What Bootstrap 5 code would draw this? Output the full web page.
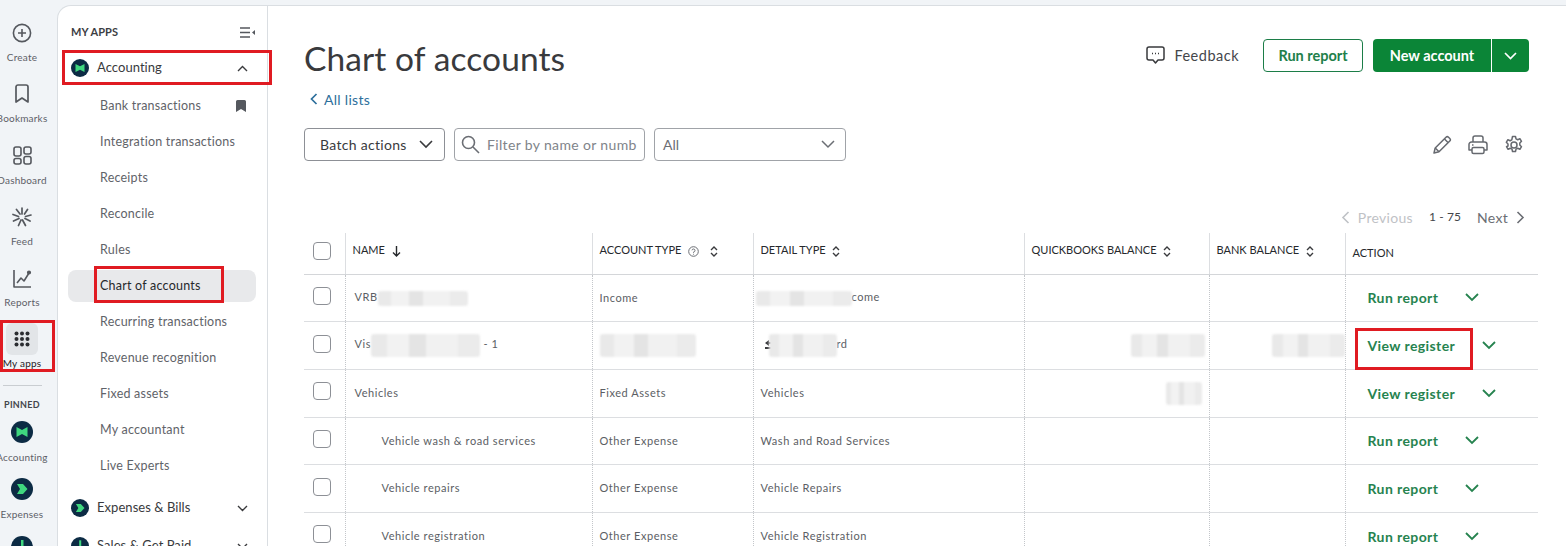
<!DOCTYPE html>
<html lang="en">
<head>
<meta charset="UTF-8">
<title>Chart of accounts</title>
<link href="https://cdn.jsdelivr.net/npm/bootstrap@5.3.0/dist/css/bootstrap.min.css" rel="stylesheet">
<style>
html, body { height: 546px; overflow: hidden; }
body { background: #f1f4f7; font-family: Lato, "Liberation Sans", sans-serif; color: #393a3d; position: relative; }
.app-shell { height: 546px; padding-top: 5px; }
.rail { width: 57px; flex: none; padding-top: 10px; }
.rail-inner { width: 44px; }
.rail-item { height: 61.3px; color: #5d6067; font-size: 10px; letter-spacing: .2px; white-space: nowrap; }
.rail-item .rail-icon { width: 32px; height: 32px; margin-top: 2px; margin-bottom: 1px; }
.rail-item.is-active { color: #1f2024; }
.rail-item.is-active .rail-icon { background: #e2e5e8; border-radius: 6px; }
.rail-rule { width: 39px; height: 1px; background: #c9cdd1; margin: 2px 0 13px; align-self: center; }
.rail-pinned { font-size: 9px; font-weight: 700; color: #44464b; letter-spacing: .3px; margin-bottom: 11px; line-height: 11px; }
.pin-item { height: 57.5px; color: #5d6067; font-size: 10px; letter-spacing: .2px; white-space: nowrap; }
.pin-item svg { margin-bottom: 7px; }
.side { width: 211px; flex: none; background: #fff; border: 1px solid #dadee2; border-width: 1px 1px 0 1px; border-top-left-radius: 14px; padding: 0 10px; overflow: hidden; }
.side-head { height: 44px; padding: 8px 2px 0 3px; font-size: 11px; font-weight: 700; letter-spacing: .05px; color: #3c3e43; }
.side-group { height: 36px; padding: 0 9px 0 3px; font-size: 13px; color: #393a3d; letter-spacing: .05px; }
.side-group + .side-sub { margin-top: 2px; }
.side-group + .side-group { margin-top: 2px; }
.side-link { height: 36px; padding: 0 10px 0 32px; margin-right: 1px; font-size: 12.5px; color: #5f6369; letter-spacing: .22px; white-space: nowrap; }
.side-link.is-current { background: #e8e9eb; border-radius: 8px; height: 32px; margin-top: 2px; margin-bottom: 2px; color: #26282c; }
.side-sub { margin-bottom: 6px; }
.page-main { flex: 1; min-width: 0; background: #fff; border-top: 1px solid #dadee2; padding: 0 28px 0 36px; }
.title-row { height: 76px; padding: 23px 9px 0 0; }
.page-title { font-size: 33.5px; font-weight: 400; margin: 0; letter-spacing: .1px; color: #393a3d; line-height: 1; padding-top: 6px; }
.feedback { font-size: 14.5px; color: #44464b; letter-spacing: .5px; margin-right: 24px; }
.feedback svg { margin-right: 9px; }
.btn-line { border: 1px solid #1c7d48; color: #217f4b; background: #fff; width: 100px; height: 33px; font-size: 14.5px; font-weight: 700; padding: 0; border-radius: 4px; margin-right: 10px; }
.btn-solid { background: #0b8537; color: #fff; border: 0; height: 33px; font-size: 14.5px; font-weight: 700; padding: 0; }
.btn-solid.main-part { width: 118px; border-radius: 4px 0 0 4px; }
.btn-solid.caret-part { width: 38px; border-radius: 0 4px 4px 0; border-left: 1px solid #fff; }
.back-row { height: 46px; font-size: 14px; color: #2d6f9c; letter-spacing: .3px; padding: 7px 0 0 6px; }
.back-row svg { margin-right: 6px; }
.tool-row { height: 33px; gap: 9px; }
.tool-icons { margin-right: 14px; }
.batch-btn { width: 141px; height: 33px; border: 1px solid #8d9096; border-radius: 4px; font-size: 14px; color: #393a3d; letter-spacing: .3px; background: #fff; padding: 0 11px 0 15px; }
.filter-box { width: 191px; height: 33px; border: 1px solid #a0a3a8; border-radius: 4px; padding: 0 6px 0 6px; font-size: 14px; color: #80848a; letter-spacing: .35px; overflow: hidden; white-space: nowrap; }
.filter-box svg { margin-right: 7px; }
.all-box { width: 192px; height: 33px; border: 1px solid #a0a3a8; border-radius: 4px; padding: 0 10px 0 8px; font-size: 14px; color: #6b6e74; }
.pager { height: 32px; font-size: 14px; padding-right: 13px; margin-top: 40px; letter-spacing: .3px; color: #6b6e74; }
.pager .pg-off { color: #bfc2c6; }
.pager .pg-count { color: #44464b; font-size: 12px; letter-spacing: .1px; margin: 0 16px; }
.coa-table { table-layout: fixed; width: 1234px; border-collapse: collapse; margin: 0; font-size: 11px; letter-spacing: .55px; color: #5b5e64; }
.coa-table col:nth-child(1) { width: 41px; }
.coa-table col:nth-child(2) { width: 247px; }
.coa-table col:nth-child(3) { width: 161px; }
.coa-table col:nth-child(4) { width: 271px; }
.coa-table col:nth-child(5) { width: 185px; }
.coa-table col:nth-child(6) { width: 136px; }
.coa-table col:nth-child(7) { width: 193px; }
.coa-table th { height: 41px; padding: 0 7px 6px; border-left: 1px solid #dcdee1; border-bottom: 1px solid #d4d6d9; font-size: 11px; font-weight: 400; color: #26282c; letter-spacing: 0; white-space: nowrap; vertical-align: middle; }
.coa-table th:first-child, .coa-table td:first-child { border-left: 0; padding: 0 0 4px 9px; }
.coa-table th.plain-th { padding-bottom: 1px; }
.coa-table td { height: 47.7px; padding: 0 7px; border-left: 1px dotted #c3c6ca; border-bottom: 1px solid #dcdee1; vertical-align: middle; white-space: nowrap; }
.coa-table td.top-name { padding-left: 9px; }
.coa-table td.sub-name { padding-left: 36px; }
.tick { width: 18px; height: 18px; border: 1px solid #8d9096; border-radius: 4px; background: #fff; display: block; }
.act-cell { display: flex; align-items: center; padding-left: 22px; font-size: 14px; font-weight: 700; color: #26834f; letter-spacing: .4px; }
.act-cell svg { margin-left: 27px; }
.smudge { display: inline-block; height: 15px; vertical-align: middle; border-radius: 3px; filter: blur(.8px); background: linear-gradient(90deg, #e9e9e9 0 15%, #f2f2f2 15% 35%, #e4e4e4 35% 50%, #f1f1f1 50% 80%, #ebebeb 80%); }
.smudge.is-tall { height: 23px; }
.mark-box { position: absolute; border: 3px solid #e01b22; pointer-events: none; }
.mark-one { left: 62px; top: 50px; width: 210px; height: 35px; }
.mark-two { left: 94px; top: 266px; width: 130px; height: 37px; }
.mark-three { left: 0; top: 320px; width: 55px; height: 52px; }
.mark-four { left: 1355px; top: 328px; width: 118px; height: 42px; }
</style>
</head>
<body>
<div class="app-shell d-flex">
  <nav class="rail">
    <div class="rail-inner d-flex flex-column">
      <div class="rail-item d-flex flex-column align-items-center">
        <div class="rail-icon d-flex align-items-center justify-content-center">
          <svg width="20" height="20" viewBox="0 0 20 20" fill="none" stroke="#55585e" stroke-width="1.6"><circle cx="10" cy="10" r="8.6"/><path d="M10 6v8M6 10h8"/></svg>
        </div>
        <span>Create</span>
      </div>
      <div class="rail-item d-flex flex-column align-items-center">
        <div class="rail-icon d-flex align-items-center justify-content-center">
          <svg width="16" height="20" viewBox="0 0 16 20" fill="none" stroke="#55585e" stroke-width="1.7" stroke-linejoin="round"><path d="M2 3a2 2 0 0 1 2-2h8a2 2 0 0 1 2 2v15l-6-4-6 4z"/></svg>
        </div>
        <span>Bookmarks</span>
      </div>
      <div class="rail-item d-flex flex-column align-items-center">
        <div class="rail-icon d-flex align-items-center justify-content-center">
          <svg width="19" height="19" viewBox="0 0 19 19" fill="none" stroke="#55585e" stroke-width="1.6"><rect x="1" y="1" width="7" height="9" rx="2"/><rect x="11" y="1" width="7" height="7" rx="2"/><rect x="1" y="12.5" width="7" height="5.5" rx="2"/><rect x="11" y="10.5" width="7" height="7.5" rx="2"/></svg>
        </div>
        <span>Dashboard</span>
      </div>
      <div class="rail-item d-flex flex-column align-items-center">
        <div class="rail-icon d-flex align-items-center justify-content-center">
          <svg width="20" height="20" viewBox="0 0 20 20" fill="none" stroke="#55585e" stroke-width="1.7" stroke-linecap="round"><path d="M10 1v6M15.5 2.5l-3 4.5M19 8l-5.500 1.500M18 14l-5-2.500M13.500 18.500L10.500 13M6.500 18.500L9 13M1.500 14L7 11.500M1 7.500l5.500 2M4.500 2.500L8 7"/></svg>
        </div>
        <span>Feed</span>
      </div>
      <div class="rail-item d-flex flex-column align-items-center">
        <div class="rail-icon d-flex align-items-center justify-content-center">
          <svg width="19" height="19" viewBox="0 0 19 19" fill="none" stroke="#55585e" stroke-width="1.6" stroke-linejoin="round"><path d="M1 1v17h17"/><path d="M4 14l4-5 3 3 5-8"/><circle cx="16" cy="3.500" r="1.300" fill="#55585e"/></svg>
        </div>
        <span>Reports</span>
      </div>
      <div class="rail-item is-active d-flex flex-column align-items-center">
        <div class="rail-icon d-flex align-items-center justify-content-center">
          <svg width="16" height="16" viewBox="0 0 16 16" fill="#2b2d31"><circle cx="2.500" cy="2.500" r="2"/><circle cx="8" cy="2.500" r="2"/><circle cx="13.500" cy="2.500" r="2"/><circle cx="2.500" cy="8" r="2"/><circle cx="8" cy="8" r="2"/><circle cx="13.500" cy="8" r="2"/><circle cx="2.500" cy="13.500" r="2"/><circle cx="8" cy="13.500" r="2"/><circle cx="13.500" cy="13.500" r="2"/></svg>
        </div>
        <span>My apps</span>
      </div>
      <div class="rail-rule"></div>
      <div class="rail-pinned text-center">PINNED</div>
      <div class="pin-item d-flex flex-column align-items-center">
        <svg width="22" height="22" viewBox="0 0 22 22"><circle cx="11" cy="11" r="11" fill="#0c2b44"/><path d="M5.500 6l5.500 3 5.500-3v10l-5.500-3-5.500 3z" fill="#3fd77f"/></svg>
        <span>Accounting</span>
      </div>
      <div class="pin-item d-flex flex-column align-items-center">
        <svg width="22" height="22" viewBox="0 0 22 22"><circle cx="11" cy="11" r="11" fill="#0c2b44"/><path d="M6 6h6l4.500 5-4.500 5H6l3-5z" fill="#3fd77f"/></svg>
        <span>Expenses</span>
      </div>
      <div class="pin-item d-flex flex-column align-items-center">
        <svg width="22" height="22" viewBox="0 0 22 22"><circle cx="11" cy="11" r="11" fill="#0c2b44"/><path d="M10 4h2.500v8H10z" fill="#3fd77f"/></svg>
      </div>
    </div>
  </nav>

  <aside class="side">
    <div class="side-head d-flex justify-content-between align-items-center">
      <span>MY APPS</span>
      <svg width="15" height="11" viewBox="0 0 15 11" fill="none" stroke="#55585e" stroke-width="1.400"><path d="M0 1h10M0 5.500h10M0 10h10"/><path d="M15 3v5l-3-2.500z" fill="#55585e" stroke="none"/></svg>
    </div>
    <div class="side-group d-flex align-items-center">
      <svg class="me-2" width="18" height="18" viewBox="0 0 22 22"><circle cx="11" cy="11" r="11" fill="#0c2b44"/><path d="M5.500 6l5.500 3 5.500-3v10l-5.500-3-5.500 3z" fill="#3fd77f"/></svg>
      <span class="flex-grow-1">Accounting</span>
      <svg width="11" height="7" viewBox="0 0 11 7" fill="none" stroke="#393a3d" stroke-width="1.400"><path d="M1 6l4.500-4.500L10 6"/></svg>
    </div>
    <div class="side-sub">
      <div class="side-link d-flex align-items-center justify-content-between">
        <span>Bank transactions</span>
        <svg width="10" height="12" viewBox="0 0 10 12" fill="#55585e"><path d="M0 1.500A1.500 1.500 0 0 1 1.500 0h7A1.500 1.500 0 0 1 10 1.500V12L5 9l-5 3z"/></svg>
      </div>
      <div class="side-link d-flex align-items-center">Integration transactions</div>
      <div class="side-link d-flex align-items-center">Receipts</div>
      <div class="side-link d-flex align-items-center">Reconcile</div>
      <div class="side-link d-flex align-items-center">Rules</div>
      <div class="side-link is-current d-flex align-items-center">Chart of accounts</div>
      <div class="side-link d-flex align-items-center">Recurring transactions</div>
      <div class="side-link d-flex align-items-center">Revenue recognition</div>
      <div class="side-link d-flex align-items-center">Fixed assets</div>
      <div class="side-link d-flex align-items-center">My accountant</div>
      <div class="side-link d-flex align-items-center">Live Experts</div>
    </div>
    <div class="side-group d-flex align-items-center">
      <svg class="me-2" width="18" height="18" viewBox="0 0 22 22"><circle cx="11" cy="11" r="11" fill="#0c2b44"/><path d="M6 6h6l4.500 5-4.500 5H6l3-5z" fill="#3fd77f"/></svg>
      <span class="flex-grow-1">Expenses &amp; Bills</span>
      <svg width="11" height="7" viewBox="0 0 11 7" fill="none" stroke="#393a3d" stroke-width="1.400"><path d="M1 1l4.500 4.500L10 1"/></svg>
    </div>
    <div class="side-group d-flex align-items-center">
      <svg class="me-2" width="18" height="18" viewBox="0 0 22 22"><circle cx="11" cy="11" r="11" fill="#0c2b44"/><path d="M10 4h2.500v8H10z" fill="#3fd77f"/></svg>
      <span class="flex-grow-1">Sales &amp; Get Paid</span>
      <svg width="11" height="7" viewBox="0 0 11 7" fill="none" stroke="#393a3d" stroke-width="1.400"><path d="M1 1l4.500 4.500L10 1"/></svg>
    </div>
  </aside>

  <main class="page-main">
    <div class="title-row d-flex justify-content-between align-items-center">
      <h1 class="page-title">Chart of accounts</h1>
      <div class="d-flex align-items-center">
        <div class="feedback d-flex align-items-center">
          <svg width="19" height="20" viewBox="0 0 19 20" fill="none" stroke="#393a3d" stroke-width="1.500" stroke-linejoin="round"><path d="M3 1h13a2 2 0 0 1 2 2v9a2 2 0 0 1-2 2h-4l-2.500 3L7 14H3a2 2 0 0 1-2-2V3a2 2 0 0 1 2-2z"/><path d="M6 7.500h1M9 7.500h1M12 7.500h1" stroke-width="1.600"/></svg>
          <span>Feedback</span>
        </div>
        <button class="btn btn-line" type="button">Run report</button>
        <div class="d-flex">
          <button class="btn btn-solid main-part" type="button">New account</button>
          <button class="btn btn-solid caret-part d-flex align-items-center justify-content-center" type="button" aria-label="More">
            <svg width="13" height="8" viewBox="0 0 13 8" fill="none" stroke="#fff" stroke-width="1.700"><path d="M1 1l5.500 5.500L12 1"/></svg>
          </button>
        </div>
      </div>
    </div>
    <div class="back-row d-flex align-items-start">
      <svg class="mt-1" width="8" height="12" viewBox="0 0 8 12" fill="none" stroke="#2d6f9c" stroke-width="1.700"><path d="M6.500 1L1.500 6l5 5"/></svg>
      <span>All lists</span>
    </div>
    <div class="tool-row d-flex align-items-center">
      <div class="batch-btn d-flex align-items-center justify-content-between">
        <span>Batch actions</span>
        <svg width="14" height="9" viewBox="0 0 14 9" fill="none" stroke="#393a3d" stroke-width="1.600"><path d="M1 1l6 6 6-6"/></svg>
      </div>
      <div class="filter-box d-flex align-items-center">
        <svg class="flex-shrink-0" width="19" height="19" viewBox="0 0 19 19" fill="none" stroke="#6b6e74" stroke-width="1.600"><circle cx="7.500" cy="7.500" r="6"/><path d="M12 12l6 6"/></svg>
        <span>Filter by name or numb</span>
      </div>
      <div class="all-box d-flex align-items-center justify-content-between">
        <span>All</span>
        <svg width="14" height="9" viewBox="0 0 14 9" fill="none" stroke="#6b6e74" stroke-width="1.500"><path d="M1 1l6 6 6-6"/></svg>
      </div>
      <div class="tool-icons ms-auto d-flex align-items-center">
        <svg class="me-3" width="20" height="20" viewBox="0 0 20 20" fill="none" stroke="#66696f" stroke-width="1.500" stroke-linejoin="round"><path d="M2 18l1.200-5L14 2.200a1.800 1.800 0 0 1 2.500 0l1.300 1.300a1.800 1.800 0 0 1 0 2.500L7 16.800z"/><path d="M12.500 4l3.500 3.500M3.200 13L7 16.800"/></svg>
        <svg class="me-3" width="20" height="20" viewBox="0 0 20 20" fill="none" stroke="#66696f" stroke-width="1.500" stroke-linejoin="round"><path d="M5 7V3a2 2 0 0 1 2-2h6a2 2 0 0 1 2 2v4"/><path d="M3.500 7h13A2.500 2.500 0 0 1 19 9.500V15h-3M4 15H1V9.500A2.500 2.500 0 0 1 3.500 7"/><rect x="4" y="12.500" width="12" height="6" rx="1.500"/><path d="M4 10h1.500"/></svg>
        <svg width="20" height="20" viewBox="0 0 20 20" fill="none" stroke="#66696f" stroke-width="1.500" stroke-linejoin="round"><circle cx="10" cy="10" r="3"/><path d="M8.500 1.500h3l.5 2.400 1.700.8 2.200-1 1.600 2.600-1.700 1.700v2l1.700 1.700-1.600 2.600-2.200-1-1.700.8-.5 2.400h-3l-.5-2.400-1.700-.8-2.200 1-1.600-2.600L4 11V9L2.300 7.300l1.600-2.600 2.200 1 1.700-.8z"/></svg>
      </div>
    </div>
    <div class="pager d-flex align-items-center justify-content-end">
      <svg class="me-2" width="9" height="13" viewBox="0 0 9 13" fill="none" stroke="#bfc2c6" stroke-width="1.600"><path d="M7.500 1L2 6.500 7.500 12"/></svg>
      <span class="pg-off">Previous</span>
      <span class="pg-count">1 - 75</span>
      <span>Next</span>
      <svg class="ms-2" width="9" height="13" viewBox="0 0 9 13" fill="none" stroke="#6b6e74" stroke-width="1.600"><path d="M1.500 1L7 6.500 1.500 12"/></svg>
    </div>
    <table class="coa-table">
      <colgroup><col><col><col><col><col><col><col></colgroup>
      <thead>
        <tr>
          <th><span class="tick"></span></th>
          <th>NAME
            <svg class="ms-1" width="9" height="11" viewBox="0 0 9 11" fill="none" stroke="#26282c" stroke-width="1.400"><path d="M4.500 0v10M1 6.500l3.500 3.500L8 6.500"/></svg>
          </th>
          <th>ACCOUNT TYPE
            <svg class="mx-1" width="11" height="11" viewBox="0 0 11 11" fill="none" stroke="#6b6e74"><circle cx="5.500" cy="5.500" r="4.800"/><path d="M4 4.300a1.500 1.500 0 1 1 1.500 1.700v.7M5.500 7.800v.8"/></svg>
            <svg class="ms-1" width="8" height="11" viewBox="0 0 8 11" fill="none" stroke="#393a3d" stroke-width="1.400"><path d="M1 4l3-3 3 3M1 7l3 3 3-3"/></svg>
          </th>
          <th>DETAIL TYPE
            <svg class="ms-1" width="8" height="11" viewBox="0 0 8 11" fill="none" stroke="#393a3d" stroke-width="1.400"><path d="M1 4l3-3 3 3M1 7l3 3 3-3"/></svg>
          </th>
          <th>QUICKBOOKS BALANCE
            <svg class="ms-1" width="8" height="11" viewBox="0 0 8 11" fill="none" stroke="#393a3d" stroke-width="1.400"><path d="M1 4l3-3 3 3M1 7l3 3 3-3"/></svg>
          </th>
          <th>BANK BALANCE
            <svg class="ms-1" width="8" height="11" viewBox="0 0 8 11" fill="none" stroke="#393a3d" stroke-width="1.400"><path d="M1 4l3-3 3 3M1 7l3 3 3-3"/></svg>
          </th>
          <th class="plain-th">ACTION</th>
        </tr>
      </thead>
      <tbody>
        <tr>
          <td><span class="tick"></span></td>
          <td class="top-name">VRB<span class="smudge" style="width:90px"></span></td>
          <td>Income</td>
          <td><span class="smudge" style="width:96px;margin-left:-5px"></span><span>come</span></td>
          <td></td><td></td>
          <td class="px-0"><div class="act-cell"><span>Run report</span><svg width="14" height="9" viewBox="0 0 14 9" fill="none" stroke="#26834f" stroke-width="1.800"><path d="M1 1l6 6 6-6"/></svg></div></td>
        </tr>
        <tr>
          <td><span class="tick"></span></td>
          <td class="top-name">Vis<span class="smudge is-tall" style="width:109px"></span> - 1</td>
          <td><span class="smudge is-tall" style="width:96px"></span></td>
          <td>
            <svg class="ms-1" width="12" height="11" viewBox="0 0 12 11" fill="#393a3d"><path d="M4 0L0 3l4 3V4h8V2H4zM8 5v2H0v2h8v2l4-3z"/></svg><span class="smudge is-tall" style="width:68px;margin-left:-8px"></span>rd
          </td>
          <td class="text-end pe-1"><span class="smudge is-tall" style="width:74px"></span></td>
          <td class="text-end pe-0"><span class="smudge is-tall" style="width:73px"></span></td>
          <td class="px-0"><div class="act-cell"><span>View register</span><svg width="14" height="9" viewBox="0 0 14 9" fill="none" stroke="#26834f" stroke-width="1.800"><path d="M1 1l6 6 6-6"/></svg></div></td>
        </tr>
        <tr>
          <td><span class="tick"></span></td>
          <td class="top-name">Vehicles</td>
          <td>Fixed Assets</td>
          <td>Vehicles</td>
          <td class="text-end"><span class="smudge is-tall" style="width:36px"></span></td>
          <td></td>
          <td class="px-0"><div class="act-cell"><span>View register</span><svg width="14" height="9" viewBox="0 0 14 9" fill="none" stroke="#26834f" stroke-width="1.800"><path d="M1 1l6 6 6-6"/></svg></div></td>
        </tr>
        <tr>
          <td><span class="tick"></span></td>
          <td class="sub-name">Vehicle wash &amp; road services</td>
          <td>Other Expense</td>
          <td>Wash and Road Services</td>
          <td></td><td></td>
          <td class="px-0"><div class="act-cell"><span>Run report</span><svg width="14" height="9" viewBox="0 0 14 9" fill="none" stroke="#26834f" stroke-width="1.800"><path d="M1 1l6 6 6-6"/></svg></div></td>
        </tr>
        <tr>
          <td><span class="tick"></span></td>
          <td class="sub-name">Vehicle repairs</td>
          <td>Other Expense</td>
          <td>Vehicle Repairs</td>
          <td></td><td></td>
          <td class="px-0"><div class="act-cell"><span>Run report</span><svg width="14" height="9" viewBox="0 0 14 9" fill="none" stroke="#26834f" stroke-width="1.800"><path d="M1 1l6 6 6-6"/></svg></div></td>
        </tr>
        <tr>
          <td><span class="tick"></span></td>
          <td class="sub-name">Vehicle registration</td>
          <td>Other Expense</td>
          <td>Vehicle Registration</td>
          <td></td><td></td>
          <td class="px-0"><div class="act-cell"><span>Run report</span><svg width="14" height="9" viewBox="0 0 14 9" fill="none" stroke="#26834f" stroke-width="1.800"><path d="M1 1l6 6 6-6"/></svg></div></td>
        </tr>
      </tbody>
    </table>
  </main>
</div>
<div class="mark-box mark-one"></div>
<div class="mark-box mark-two"></div>
<div class="mark-box mark-three"></div>
<div class="mark-box mark-four"></div>
<script src="https://cdn.jsdelivr.net/npm/bootstrap@5.3.0/dist/js/bootstrap.bundle.min.js"></script>
</body>
</html>
